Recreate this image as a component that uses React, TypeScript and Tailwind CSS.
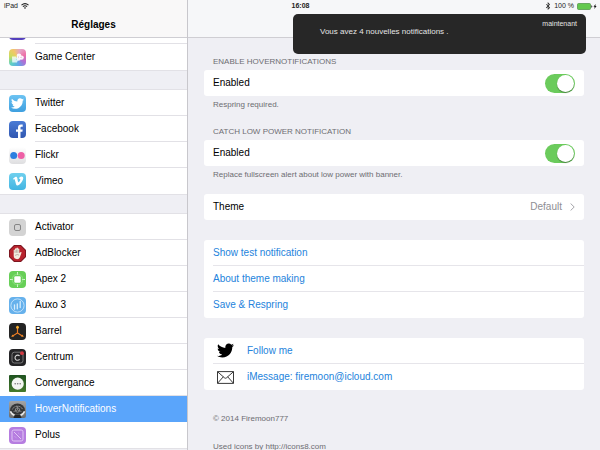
import { useId, useState } from 'react';
import type { ReactNode } from 'react';
import { FaTwitter, FaFacebookF, FaVimeoV, FaBluetoothB } from 'react-icons/fa';
import { clsx } from 'clsx';

const TILE = 'flex h-[17px] w-[17px] shrink-0 items-center justify-center overflow-hidden rounded';

// Sidebar icons
const MusicIcon = () => <span className={clsx(TILE, 'bg-[#5540bd]')} />;

const GameCenterIcon = () => (
  <span className={clsx(TILE, 'bg-[conic-gradient(from_20deg,#e3a5c8,#ef6fa6,#b06fd6,#5fa8e8,#5fd0c4,#c9dd5e,#f2c766,#e3a5c8)]')}>
    <svg viewBox="0 0 17 17" className="h-full w-full" fill="#fff" fillOpacity="0.9">
      <path d="M3 7.5h4.5V11H9l-1 2.5H3.2z" fillOpacity="0.75" />
      <circle cx="10" cy="6.8" r="2.3" />
      <circle cx="12.6" cy="8.6" r="2.2" />
      <circle cx="9.6" cy="9.6" r="2.2" />
      <circle cx="9.6" cy="8" r="0.5" fill="#c487c0" />
      <circle cx="12" cy="8.2" r="0.5" fill="#c487c0" />
    </svg>
  </span>
);

const TwitterIcon = () => (
  <span className={clsx(TILE, 'bg-linear-to-b from-[#6cc3f2] to-[#3e9fdf]')}>
    <FaTwitter className="h-[13px] w-[13px] text-white" />
  </span>
);

const FacebookIcon = () => (
  <span className={clsx(TILE, 'bg-linear-to-b from-[#4a7bd6] to-[#3157b0]')}>
    <svg viewBox="0 0 17 17" className="h-full w-full">
      <path d="M9 17v-6.2H7V8.4h2V6.7C9 4.7 10.1 3.6 12 3.6h1.7v2.2h-1.2c-.7 0-1 .4-1 1v1.6h2.2l-.3 2.4h-1.9V17z" fill="#fff" />
    </svg>
  </span>
);

const FlickrIcon = () => (
  <span className={clsx(TILE, 'bg-linear-to-b from-white to-[#dedee0]')}>
    <svg viewBox="0 0 17 17" className="h-full w-full">
      <circle cx="4.7" cy="8.5" r="3.5" fill="#2b7fe0" />
      <circle cx="12.2" cy="8.5" r="3.5" fill="#ee5fa5" />
    </svg>
  </span>
);

const VimeoIcon = () => (
  <span className={clsx(TILE, 'bg-linear-to-b from-[#6fd0ee] to-[#41b5e2]')}>
    <FaVimeoV className="h-3 w-3 text-white" />
  </span>
);

const ActivatorIcon = () => (
  <span className={clsx(TILE, 'bg-[#d3d3d3]')}>
    <span className="h-[7px] w-[7px] rounded-[2px] border border-[#858585]" />
  </span>
);

const AdBlockerIcon = () => (
  <svg viewBox="0 0 17 17" className="h-[17px] w-[17px] shrink-0">
    <path d="M5 0h7l5 5v7l-5 5H5l-5-5V5z" fill="#7d1620" />
    <path d="M5.4 1h6.2L16 5.4v6.2L11.6 16H5.4L1 11.6V5.4z" fill="#b8232d" />
    <path d="M4.7 8V5q.7-.8 1.3 0V3.7q.7-.9 1.4 0V3q.8-.9 1.5 0v.8q.8-.8 1.4.1v4.2l1.5-1.2q1.1-.1.6 1L10.9 12.3q-.8 1.9-2.8 1.9-3.4-.2-3.4-3.4z" fill="#f3ecdf" />
    <path d="M6 5.3v2.6M7.4 4.5v3.3M8.9 4.5v3.4M6 10.4q2.5-1.6 4-.3" fill="none" stroke="#6e5a50" strokeWidth="0.4" />
  </svg>
);

const ApexIcon = () => (
  <span className={clsx(TILE, 'bg-[#67cf57]')}>
    <svg viewBox="0 0 17 17" className="h-full w-full">
      <path d="M8.5 1v3M8.5 13v3M1 8.5h3M13 8.5h3" stroke="#d7f4d2" strokeWidth="1" />
      <circle cx="8.5" cy="8.5" r="5.4" fill="none" stroke="#9be28f" strokeWidth="0.7" />
      <rect x="5.3" y="5.3" width="6.4" height="6.4" rx="1.2" fill="#fff" />
    </svg>
  </span>
);

const AuxoIcon = () => (
  <span className={clsx(TILE, 'bg-[#66b1ec]')}>
    <svg viewBox="0 0 17 17" className="h-full w-full" fill="none" stroke="#d6ecfc">
      <circle cx="8.5" cy="8.5" r="6.6" strokeWidth="0.8" />
      <path d="M5.5 7.8v4.4M8.3 6.8v5M11.2 4.5v6" strokeWidth="1.3" strokeLinecap="round" />
    </svg>
  </span>
);

const BarrelIcon = () => (
  <span className={clsx(TILE, 'bg-[#242424]')}>
    <svg viewBox="0 0 17 17" className="h-full w-full">
      <path d="M8.5 4v6L3.6 12.9M8.5 10l4.9 2.9" fill="none" stroke="#ee7b22" strokeWidth="1.2" />
      <path d="M8.5 2.6l1.6 2.2H6.9z" fill="#f9b233" />
      <circle cx="8.5" cy="4.4" r="1.3" fill="#f9b233" />
      <path d="M2.2 13.7l1.3-2.2 1.4 2.2zM14.8 13.7l-1.3-2.2-1.4 2.2z" fill="#f08a2a" />
    </svg>
  </span>
);

const CentrumIcon = () => (
  <span className={clsx(TILE, 'bg-[#242426]')}>
    <svg viewBox="0 0 17 17" className="h-full w-full" fill="none">
      <rect x="3" y="3.2" width="11" height="10.8" rx="2.4" stroke="#8f8f91" strokeWidth="0.8" />
      <path d="M10.6 7A2.6 2.6 0 1 0 10.6 10.4" stroke="#d5d5d5" strokeWidth="1.1" />
      <circle cx="13" cy="4.2" r="1.9" fill="#d23a42" />
    </svg>
  </span>
);

const ConvergenceIcon = () => (
  <span className={clsx(TILE, 'rounded-[1px] bg-linear-to-b from-[#1f5320] to-[#457a2c]')}>
    <svg viewBox="0 0 17 17" className="h-full w-full">
      <circle cx="8.7" cy="8.7" r="6.1" fill="#f3f6f1" />
      <circle cx="6.2" cy="8.7" r="0.8" fill="#777" />
      <circle cx="8.7" cy="8.7" r="0.8" fill="#777" />
      <circle cx="11.2" cy="8.7" r="0.8" fill="#777" />
    </svg>
  </span>
);

const HoverIcon = () => (
  <span className={clsx(TILE, 'rounded-[2px] bg-linear-to-b from-[#a4a4a4] to-[#6c6c6c]')}>
    <svg viewBox="0 0 17 17" className="h-full w-full" fill="none">
      <path d="M1 9.5A7.5 7 0 0 1 16 9.5L13 13H4z" fill="#343536" />
      <path d="M1.4 10.4Q3 13.6 5.6 14.4M15.6 10.4Q14 13.6 11.4 14.4" stroke="#e6e6e6" strokeWidth="1.7" />
      <path d="M3.4 8.4A5.4 4.8 0 0 1 13.6 8.4" stroke="#c4c4c4" strokeWidth="0.8" strokeDasharray="1 0.6" />
      <circle cx="8.5" cy="9" r="2.2" stroke="#9a9a9a" strokeWidth="0.8" />
      <path d="M8.5 9V5M8.5 9l4 1.6M8.5 9l-4 1.6" stroke="#8d8d8d" strokeWidth="0.8" />
      <path d="M4.4 17l1.6-3.4h5l1.6 3.4z" fill="#252525" />
    </svg>
  </span>
);

const PolusIcon = () => (
  <span className={clsx(TILE, 'bg-[#b67de0]')}>
    <svg viewBox="0 0 17 17" className="h-full w-full" fill="none" stroke="#e6cff7">
      <rect x="3" y="3" width="11" height="11" rx="1.8" strokeWidth="0.9" />
      <path d="M5 5l7 7" strokeWidth="0.9" />
      <path d="M5.6 9.2l2 2M9.2 5.8l2 2" strokeWidth="0.6" strokeDasharray="0.8 0.5" />
    </svg>
  </span>
);

// Status bar and content icons
const WifiIcon = () => (
  <svg viewBox="0 0 8 6" className="h-[6px] w-2" fill="none" stroke="#222" strokeWidth="1.1">
    <path d="M0.5 2.2Q4-.9 7.5 2.2M1.9 3.7Q4 1.9 6.1 3.7" />
    <path d="M4 5.9L2.9 4.7Q4 3.9 5.1 4.7z" fill="#222" stroke="none" />
  </svg>
);

const BatteryIcon = () => (
  <svg viewBox="0 0 20 7" className="h-[7px] w-5">
    <rect x="0.5" y="0.5" width="13" height="6" rx="1" fill="#63c94f" stroke="#4b8f43" strokeWidth="0.7" />
    <path d="M14.3 2.3q1 .2 1 1.2t-1 1.2z" fill="#222" />
    <path d="M18.6 1l-2.1 2.8h1.2L17.3 6l2.3-2.9h-1.2z" fill="#111" />
  </svg>
);

const EnvelopeIcon = () => (
  <svg viewBox="0 0 17 13" className="h-[13px] w-[17px]" fill="none" stroke="#222" strokeWidth="0.9">
    <path d="M.5.6h16v11.8H.5zM.6.8l7 6.1q.9.7 1.8 0l7-6.1M.6 12.2l5.7-6.4M16.4 12.2l-5.7-6.4" />
  </svg>
);

type NavEntry = { label: string; icon: () => ReactNode };

const NAV_GROUPS: NavEntry[][] = [
  [
    { label: '', icon: MusicIcon },
    { label: 'Game Center', icon: GameCenterIcon },
  ],
  [
    { label: 'Twitter', icon: TwitterIcon },
    { label: 'Facebook', icon: FacebookIcon },
    { label: 'Flickr', icon: FlickrIcon },
    { label: 'Vimeo', icon: VimeoIcon },
  ],
  [
    { label: 'Activator', icon: ActivatorIcon },
    { label: 'AdBlocker', icon: AdBlockerIcon },
    { label: 'Apex 2', icon: ApexIcon },
    { label: 'Auxo 3', icon: AuxoIcon },
    { label: 'Barrel', icon: BarrelIcon },
    { label: 'Centrum', icon: CentrumIcon },
    { label: 'Convergance', icon: ConvergenceIcon },
    { label: 'HoverNotifications', icon: HoverIcon },
    { label: 'Polus', icon: PolusIcon },
  ],
];

const ACTIONS = ['Show test notification', 'About theme making', 'Save & Respring'];

function Panel({ children }: { children: ReactNode }) {
  return <div className="overflow-hidden rounded-[3px] bg-white pl-[9px]">{children}</div>;
}

function SwitchSection({ title, note }: { title: string; note: string }) {
  const [on, setOn] = useState(true);
  const id = useId();
  return (
    <section>
      <h2 className="px-[9px] text-[8px] leading-4 text-[#6d6d72]">{title}</h2>
      <Panel>
        <div className="flex h-[26px] items-center justify-between pr-[9px]">
          <label htmlFor={id}>Enabled</label>
          <input
            id={id}
            type="checkbox"
            role="switch"
            checked={on}
            onChange={e => setOn(e.target.checked)}
            className="h-[19px] w-[30px] appearance-none rounded-full bg-gray-300 p-px before:block before:h-[17px] before:w-[17px] before:rounded-full before:bg-white before:shadow-[0_1px_1px_rgba(0,0,0,0.35)] checked:bg-[#6bcb5c] checked:before:ml-auto"
          />
        </div>
      </Panel>
      <p className="mt-px px-[9px] text-[8px] leading-4 text-[#6d6d72]">{note}</p>
    </section>
  );
}

function Sidebar() {
  const [selected, setSelected] = useState('HoverNotifications');
  return (
    <aside className="flex w-[188px] shrink-0 flex-col overflow-hidden border-r border-[#c8c7cc]">
      <header className="flex h-[38px] shrink-0 items-end justify-center border-b border-[#cfced3] bg-[#f9f8f8] pb-[5px]">
        <h1 className="text-[10px] leading-[14px] font-bold">Réglages</h1>
      </header>
      <nav className="min-h-0 flex-1 overflow-hidden">
        <div className="-mt-5 flex flex-col gap-5">
          {NAV_GROUPS.map((group, g) => (
            <ul key={g} className="bg-white shadow-[0_0_0_1px_#e2e1e6]">
              {group.map(({ label, icon: Icon }, i) => {
                const active = label === selected;
                return (
                  <li key={label}>
                    <button
                      type="button"
                      aria-label={label || 'Musique'}
                      onClick={() => setSelected(label)}
                      className={clsx('flex h-[26px] w-full items-center gap-[9px] pl-[9px] text-left', active && 'bg-[#5aa5fb] text-white')}
                    >
                      <Icon />
                      <span
                        className={clsx(
                          'flex h-full flex-1 items-center',
                          i < group.length - 1 && !active && 'border-b border-[#e2e1e6]'
                        )}
                      >
                        {label}
                      </span>
                    </button>
                  </li>
                );
              })}
            </ul>
          ))}
        </div>
      </nav>
    </aside>
  );
}

function StatusBar() {
  return (
    <div className="absolute inset-x-0 top-0 z-10 grid h-3 grid-cols-3 items-center pr-[3px] pl-1 text-[7px] leading-3 text-[#222]">
      <div className="flex items-center gap-[3px]">
        <span>iPad</span>
        <WifiIcon />
      </div>
      <time className="text-center font-bold">16:08</time>
      <div className="flex items-center justify-end gap-[3px]">
        <FaBluetoothB className="h-2 w-[6px]" />
        <span>100 %</span>
        <BatteryIcon />
      </div>
    </div>
  );
}

export default function App() {
  return (
    <div className="relative flex h-screen overflow-hidden bg-[#efeff4] font-['Liberation_Sans',Arial,sans-serif] text-[10px] leading-[14px] text-black">
      <StatusBar />
      <Sidebar />

      <main className="min-w-0 flex-1 overflow-hidden">
        <header className="h-[38px] border-b border-[#cfced3] bg-[#f6f7f9]" />

        <div className="px-4 pt-4">
          <div className="flex flex-col gap-[11px]">
            <SwitchSection title="ENABLE HOVERNOTIFICATIONS" note="Respring required." />
            <SwitchSection title="CATCH LOW POWER NOTIFICATION" note="Replace fullscreen alert about low power with banner." />
            <Panel>
              <button type="button" className="flex h-[26px] w-full items-center pr-[9px]">
                <span>Theme</span>
                <span className="ml-auto text-[#8e8e93]">Default</span>
                <svg viewBox="0 0 5 8" className="ml-2 h-2 w-[5px]" fill="none" stroke="#a5a5aa" strokeWidth="1">
                  <path d="M.6.5L4.2 4 .6 7.5" />
                </svg>
              </button>
            </Panel>
          </div>

          <div className="mt-5 flex flex-col gap-5 text-[#2483dc]">
            <Panel>
              {ACTIONS.map(action => (
                <button
                  key={action}
                  type="button"
                  className="flex h-[26px] w-full items-center border-b border-[#e6e5ea] last:border-b-0"
                >
                  {action}
                </button>
              ))}
            </Panel>

            <Panel>
              <a href="#follow" className="flex h-[26px] items-center gap-[13px] border-b border-[#e6e5ea] pl-1">
                <FaTwitter className="h-[17px] w-[17px] text-black" />
                Follow me
              </a>
              <a href="mailto:firemoon@icloud.com" className="flex h-[26px] items-center gap-[13px] pl-1">
                <EnvelopeIcon />
                iMessage: firemoon@icloud.com
              </a>
            </Panel>
          </div>

          <footer className="mt-[21px] flex flex-col gap-3 px-[9px] text-[8px] leading-4 text-[#6d6d72]">
            <p>© 2014 Firemoon777</p>
            <p>Used icons by http://icons8.com</p>
          </footer>
        </div>
      </main>

      {/* Notification banner */}
      <div
        role="status"
        className="absolute top-[14px] right-[14px] z-20 flex h-10 w-[293px] items-start justify-between rounded-[5px] bg-[#272727] pt-1 pr-[9px] pl-[27px] text-[#e4e4e4]"
      >
        <p className="pt-2 text-[8px] leading-3">Vous avez 4 nouvelles notifications .</p>
        <time className="text-[7px] leading-3">maintenant</time>
      </div>
    </div>
  );
}
